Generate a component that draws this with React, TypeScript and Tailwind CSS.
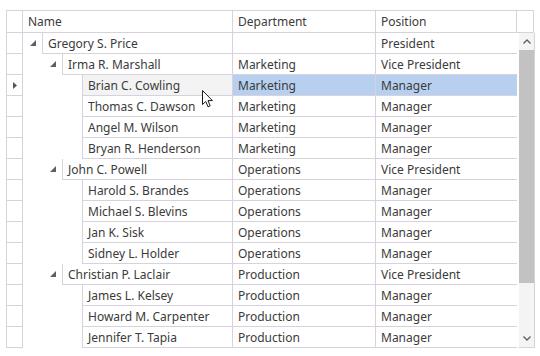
import React from "react";

interface Employee {
  name: string;
  department: string;
  position: string;
  level: number;
  hasChildren?: boolean;
}

const rows: Employee[] = [
  { name: "Gregory S. Price", department: "", position: "President", level: 0, hasChildren: true },
  { name: "Irma R. Marshall", department: "Marketing", position: "Vice President", level: 1, hasChildren: true },
  { name: "Brian C. Cowling", department: "Marketing", position: "Manager", level: 2 },
  { name: "Thomas C. Dawson", department: "Marketing", position: "Manager", level: 2 },
  { name: "Angel M. Wilson", department: "Marketing", position: "Manager", level: 2 },
  { name: "Bryan R. Henderson", department: "Marketing", position: "Manager", level: 2 },
  { name: "John C. Powell", department: "Operations", position: "Vice President", level: 1, hasChildren: true },
  { name: "Harold S. Brandes", department: "Operations", position: "Manager", level: 2 },
  { name: "Michael S. Blevins", department: "Operations", position: "Manager", level: 2 },
  { name: "Jan K. Sisk", department: "Operations", position: "Manager", level: 2 },
  { name: "Sidney L. Holder", department: "Operations", position: "Manager", level: 2 },
  { name: "Christian P. Laclair", department: "Production", position: "Vice President", level: 1, hasChildren: true },
  { name: "James L. Kelsey", department: "Production", position: "Manager", level: 2 },
  { name: "Howard M. Carpenter", department: "Production", position: "Manager", level: 2 },
  { name: "Jennifer T. Tapia", department: "Production", position: "Manager", level: 2 },
];

const selectedIndex = 2;

// small filled triangle used as expand/collapse glyph
const Expander = () => (
  <svg width="6" height="6" viewBox="0 0 6 6">
    <path d="M6 0 L6 6 L0 6 Z" fill="#5f5f5f" />
  </svg>
);

const Cursor = () => (
  <svg width="13" height="20" viewBox="0 0 13 20" className="absolute left-[201px] top-[89px]">
    <path
      d="M1.5 1.5 L1.5 15.5 L4.8 12.5 L7 17.8 L9.2 16.8 L7 11.6 L11.4 11.6 Z"
      fill="#ffffff"
      stroke="#1a1a1a"
      strokeWidth="1"
      strokeLinejoin="miter"
    />
  </svg>
);

const TreeRow = ({ row, selected }: { row: Employee; selected: boolean }) => {
  const indent = 19 + row.level * 20;
  return (
    <div className="flex h-[21px]">
      <div className="w-[16px] shrink-0 border-r border-b border-[#d7d2de] flex items-center justify-center">
        {selected && (
          <svg width="4" height="7" viewBox="0 0 4 7">
            <path d="M0 0 L4 3.5 L0 7 Z" fill="#555555" />
          </svg>
        )}
      </div>
      <div className="w-[210px] shrink-0 flex border-r border-[#d7d2de]">
        <div className="shrink-0 relative" style={{ width: indent }}>
          {row.hasChildren && (
            <div className="absolute right-[6px] top-[7px]">
              <Expander />
            </div>
          )}
        </div>
        <div
          className={
            "flex-1 min-w-0 border-l border-b border-[#d7d2de] pl-[5px] pt-[2px] flex items-center whitespace-nowrap " +
            (selected ? "bg-[#f3f3f3]" : "")
          }
        >
          {row.name}
        </div>
      </div>
      <div
        className={
          "w-[143px] shrink-0 border-r border-b border-[#d7d2de] pl-[5px] pt-[2px] flex items-center " +
          (selected ? "bg-[#b7d0ef]" : "")
        }
      >
        {row.department}
      </div>
      <div
        className={
          "w-[141px] shrink-0 border-b border-[#d7d2de] pl-[5px] pt-[2px] flex items-center " +
          (selected ? "bg-[#b7d0ef]" : "")
        }
      >
        {row.position}
      </div>
    </div>
  );
};

export default function App() {
  return (
    <div className="w-[540px] h-[356px] bg-white relative font-['Noto_Sans',sans-serif] text-[12px] text-[#3b3b3b]">
      <div className="absolute left-[6px] top-[10px] w-[528px] border-l border-t border-[#d7d2de]">
        {/* header */}
        <div className="flex h-[22px] border-b border-[#d7d2de]">
          <div className="w-[16px] shrink-0 border-r border-[#d7d2de]" />
          <div className="w-[210px] shrink-0 border-r border-[#d7d2de] pl-[5px] pt-[1px] flex items-center">Name</div>
          <div className="w-[143px] shrink-0 border-r border-[#d7d2de] pl-[5px] pt-[1px] flex items-center">Department</div>
          <div className="w-[141px] shrink-0 border-r border-[#d7d2de] pl-[5px] pt-[1px] flex items-center">Position</div>
          <div className="w-[17px] shrink-0 border-r border-[#d7d2de]" />
        </div>
        <div className="flex">
          <div className="w-[511px] shrink-0">
            {rows.map((row, i) => (
              <TreeRow key={row.name} row={row} selected={i === selectedIndex} />
            ))}
          </div>
          {/* scrollbar */}
          <div className="w-[17px] shrink-0 bg-[#f4f4f4] border-r border-b border-l border-[#d7d2de] border-l-white flex flex-col">
            <div className="h-[17px] flex items-center justify-center">
              <svg width="8" height="5" viewBox="0 0 8 5">
                <path d="M0.5 4.5 L4 1 L7.5 4.5" fill="none" stroke="#606060" strokeWidth="1.4" />
              </svg>
            </div>
            <div className="h-[233px] bg-[#c2c2c2]" />
            <div className="flex-1" />
            <div className="h-[17px] flex items-center justify-center">
              <svg width="8" height="5" viewBox="0 0 8 5">
                <path d="M0.5 0.5 L4 4 L7.5 0.5" fill="none" stroke="#606060" strokeWidth="1.4" />
              </svg>
            </div>
          </div>
        </div>
      </div>
      <Cursor />
    </div>
  );
}
